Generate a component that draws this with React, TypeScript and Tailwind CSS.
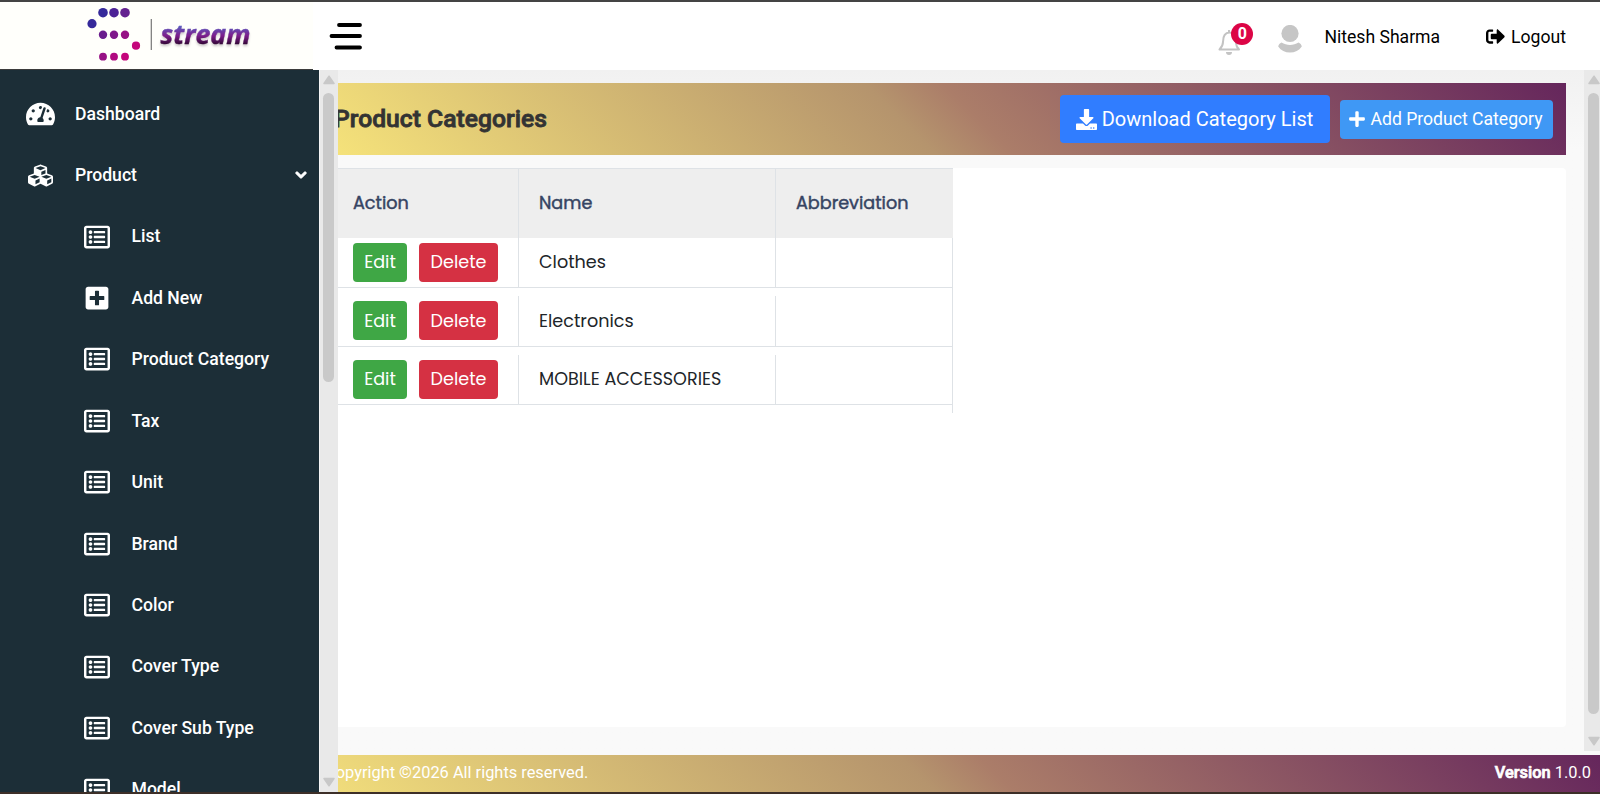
import React from 'react';
import {
  FaChevronDown,
  FaCubes,
  FaDownload,
  FaPlus,
  FaPlusSquare,
  FaRegListAlt,
  FaSignOutAlt,
  FaTachometerAlt,
} from 'react-icons/fa';

interface Category {
  id: number;
  name: string;
  abbreviation: string;
}

const categories: Category[] = [
  { id: 1, name: 'Clothes', abbreviation: '' },
  { id: 2, name: 'Electronics', abbreviation: '' },
  { id: 3, name: 'MOBILE ACCESSORIES', abbreviation: '' },
];

const productLinks = [
  'List',
  'Add New',
  'Product Category',
  'Tax',
  'Unit',
  'Brand',
  'Color',
  'Cover Type',
  'Cover Sub Type',
  'Model',
];

const logoDots = [
  { x: 23, y: 9, r: 4.8, fill: '#35299a' },
  { x: 34, y: 9, r: 4.8, fill: '#4c2296' },
  { x: 45, y: 9, r: 4.8, fill: '#642290' },
  { x: 12, y: 20, r: 4.6, fill: '#35299a' },
  { x: 23, y: 31, r: 4.2, fill: '#6a1d8e' },
  { x: 34, y: 31, r: 4.2, fill: '#7f178a' },
  { x: 45, y: 31, r: 4.2, fill: '#971185' },
  { x: 56, y: 42, r: 4.1, fill: '#c4067b' },
  { x: 23, y: 53, r: 3.9, fill: '#971185' },
  { x: 34, y: 53, r: 3.9, fill: '#b00a80' },
  { x: 45, y: 53, r: 3.9, fill: '#c4067b' },
];

const Logo: React.FC = () => (
  <svg className="h-[68px] w-[180px]" viewBox="0 0 180 68">
    <defs>
      <linearGradient id="streamFill" x1="0" y1="0" x2="0" y2="1">
        <stop offset="0.28" stopColor="#5b5cc0" />
        <stop offset="0.55" stopColor="#7d1d8c" />
        <stop offset="0.78" stopColor="#350838" />
      </linearGradient>
    </defs>
    {logoDots.map((dot, i) => (
      <circle key={i} cx={dot.x} cy={dot.y + 1.7} r={dot.r} fill={dot.fill} />
    ))}
    <path d="M71.3 17v31" stroke="#777" strokeWidth="1.2" />
    <text
      className="drop-shadow-[0_2px_1px_rgba(60,40,60,0.25)]"
      x="80.500"
      y="42"
      fontSize="26"
      fontWeight="700"
      fontStyle="italic"
      fontFamily="Open Sans, sans-serif"
      fill="url(#streamFill)"
      stroke="url(#streamFill)"
      strokeWidth="0.4"
      textLength="90"
      lengthAdjust="spacingAndGlyphs"
    >
      stream
    </text>
  </svg>
);

const ScrollArrow: React.FC<{ down?: boolean }> = ({ down }) => (
  <svg className={down ? 'h-[10px] w-3 rotate-180' : 'h-[10px] w-3'} viewBox="0 0 12 10">
    <path d="M6 1.2 11 8.4H1Z" fill="#c8c8c8" stroke="#c8c8c8" strokeWidth="1.5" strokeLinejoin="round" />
  </svg>
);

const Header: React.FC = () => (
  <header className="relative z-10 flex h-[70px] shrink-0 bg-white">
    <div className="flex w-[313px] justify-center border-t-2 border-b border-t-[#444] border-b-[#3b3b3b] bg-[#fffffb] pl-[27px]">
      <Logo />
    </div>
    <div className="flex flex-1 items-center border-t-2 border-[#444] pr-[34px] pl-4">
      <svg className="h-[28px] w-[34px]" viewBox="0 0 34 28" stroke="#000" strokeWidth="3.8" strokeLinecap="round">
        <path d="M10 3h21M2.500 14h28.500M7.500 25.500h23.500" />
      </svg>
      <div className="ml-auto flex items-center pt-0.5 text-[17.6px] text-black">
        <div className="relative mt-[9px] mr-9 h-[26px] w-6">
          <svg className="h-[26px] w-6" viewBox="0 0 24 26" fill="none" stroke="#c3c3c3" strokeWidth="2">
            <path d="M11 1v2M1.500 20.500h19.500c-2-2-3-4-3-7.500 0-6-1.500-9.500-6.500-9.500S5 7 5 13c0 3.500-1.500 5.500-3.500 7.500Z" strokeLinejoin="round" />
            <path d="M8 23h6a3 3 0 0 1-6 0Z" fill="#c3c3c3" stroke="none" />
          </svg>
          <span className="absolute -top-[6px] left-[13px] flex h-[22px] w-[22px] items-center justify-center rounded-full bg-[#dc0546] text-base font-bold text-white">
            0
          </span>
        </div>
        <svg className="mt-1 mr-[22px] h-7 w-6" viewBox="0 0 24 28" fill="#c6c6c6">
          <circle cx="12" cy="8.500" r="8.600" />
          <path d="M3.500 17.500c5 3.200 12 3.200 17 0 1.700.8 3 2.200 3.300 3.900C21 25.500 17 27.500 12 27.500S3 25.500.2 21.400c.3-1.700 1.600-3.100 3.300-3.900Z" />
        </svg>
        <span className="mr-[46px]">Nitesh Sharma</span>
        <a className="flex items-center gap-[6px]">
          <FaSignOutAlt className="h-[19px] w-[19px]" />
          Logout
        </a>
      </div>
    </div>
  </header>
);

const Sidebar: React.FC = () => (
  <aside className="flex w-[338px] shrink-0">
    <nav className="h-full w-[319px] overflow-hidden bg-[#1c2e37] pt-[13px] text-[17.6px] font-medium text-white">
      <div className="flex h-[61.450px] items-center">
        <FaTachometerAlt className="ml-[26px] h-[26px] w-[29px]" />
        <span className="ml-5">Dashboard</span>
      </div>
      <div className="flex h-[61.450px] items-center">
        <FaCubes className="ml-[28px] h-[25px] w-[25px]" />
        <span className="ml-[22px]">Product</span>
        <FaChevronDown className="mr-3 ml-auto h-3 w-3 stroke-white stroke-[50]" />
      </div>
      {productLinks.map((label) => (
        <div key={label} className="flex h-[61.450px] items-center pl-[84px]">
          {label === 'Add New' ? (
            <FaPlusSquare className="h-[26px] w-[26px]" />
          ) : (
            <FaRegListAlt className="h-[26px] w-[26px]" />
          )}
          <span className="ml-[21.500px]">{label}</span>
        </div>
      ))}
    </nav>
    <div className="flex w-[19px] flex-col items-center border-l border-[#f5f5f5] bg-[#e9e9e9] pt-[5px] pr-px pb-[5px]">
      <ScrollArrow />
      <div className="mt-2 h-[289px] w-[11px] rounded-full bg-[#c9c9c9]" />
      <div className="mt-auto">
        <ScrollArrow down />
      </div>
    </div>
  </aside>
);

const CategoryTable: React.FC = () => (
  <div className="w-[615px] border-t border-[#dee2e6] font-[Poppins,Inter,sans-serif] text-[17.6px]">
    <div className="grid h-[69px] grid-cols-[181px_257px_177px] bg-[#eee] text-[#364463] [-webkit-text-stroke:0.45px_#364463]">
      <div className="flex items-center border-r border-[#dee2e6] pb-px pl-[15px]">Action</div>
      <div className="flex items-center border-r border-[#dee2e6] pb-px pl-5">Name</div>
      <div className="flex items-center pb-px pl-5">Abbreviation</div>
    </div>
    <div className="border-r border-[#dee2e6] pb-2">
      {categories.map((category, i) => (
        <div
          key={category.id}
          className={
            i === 0
              ? 'grid h-[50px] grid-cols-[181px_257px_176px] border-b border-[#dee2e6] text-[#212529]'
              : 'grid h-[58.500px] grid-cols-[181px_257px_176px] border-b border-[#dee2e6] pt-2 text-[#212529]'
          }
        >
          <div className="flex items-center gap-3 border-r border-[#dee2e6] pl-[15px] text-white">
            <button className="h-[39px] w-[54px] rounded bg-[#3fa745]">Edit</button>
            <button className="h-[39px] w-[79px] rounded bg-[#d53143]">Delete</button>
          </div>
          <div className="flex items-center border-r border-[#dee2e6] pl-5">{category.name}</div>
          <div className="flex items-center pl-5">{category.abbreviation}</div>
        </div>
      ))}
    </div>
  </div>
);

const App: React.FC = () => {
  return (
    <div className="flex h-[794px] w-[1600px] flex-col overflow-hidden border-b-2 border-[#3d2f28] bg-[#f9f9f9] font-[Roboto,sans-serif]">
      <Header />
      <div className="flex min-h-0 flex-1">
        <Sidebar />
        <div className="flex min-w-0 flex-1 flex-col">
          <div className="flex min-h-0 flex-1">
            <main className="min-w-0 flex-1 bg-linear-to-b from-[#f1f1f1] to-[#f9f9f9] to-[80px] pt-[13px] pr-[18px]">
              <div className="flex h-[72px] items-center overflow-hidden bg-[linear-gradient(45deg,#f5e27a_0%,#b5946d_46%,#ab7d69_52%,#65265c_100%)] pr-[13px]">
                <h1 className="-ml-[4px] text-[24.7px] font-medium text-[#333] [-webkit-text-stroke:0.8px_#333]">
                  Product Categories
                </h1>
                <button className="ml-auto flex h-12 w-[270px] items-center justify-center gap-[5px] rounded bg-[#307dff] pr-px text-xl text-white">
                  <FaDownload className="h-[21px] w-[21px]" />
                  Download Category List
                </button>
                <button className="ml-[10px] flex h-[39px] w-[213px] items-center justify-center gap-1 rounded bg-[#3f98f5] pr-0.5 text-[17.6px] text-white">
                  <FaPlus className="h-[18px] w-[18px]" />
                  Add Product Category
                </button>
              </div>
              <section className="mt-[13px] h-[559px] rounded-r bg-white">
                <CategoryTable />
              </section>
            </main>
            <div className="mb-[4px] flex w-4 flex-col items-end bg-[#e9e9e9] pt-[5px] pb-[5px]">
              <ScrollArrow />
              <div className="mt-2 mr-px h-[621px] w-[11px] rounded-full bg-[#c9c9c9]" />
              <div className="mt-auto">
                <ScrollArrow down />
              </div>
            </div>
          </div>
          <footer className="flex h-[37px] shrink-0 items-center justify-between overflow-hidden bg-[linear-gradient(45deg,#f0dc7b_0%,#b5946d_46%,#ab7d69_52%,#65265c_100%)] pr-[9px] text-[16.4px] text-white">
            <span className="-ml-[13px]">Copyright ©2026 All rights reserved.</span>
            <span>
              <b className="font-medium [-webkit-text-stroke:0.7px_#fff]">Version</b> 1.0.0
            </span>
          </footer>
        </div>
      </div>
    </div>
  );
};

export default App;
